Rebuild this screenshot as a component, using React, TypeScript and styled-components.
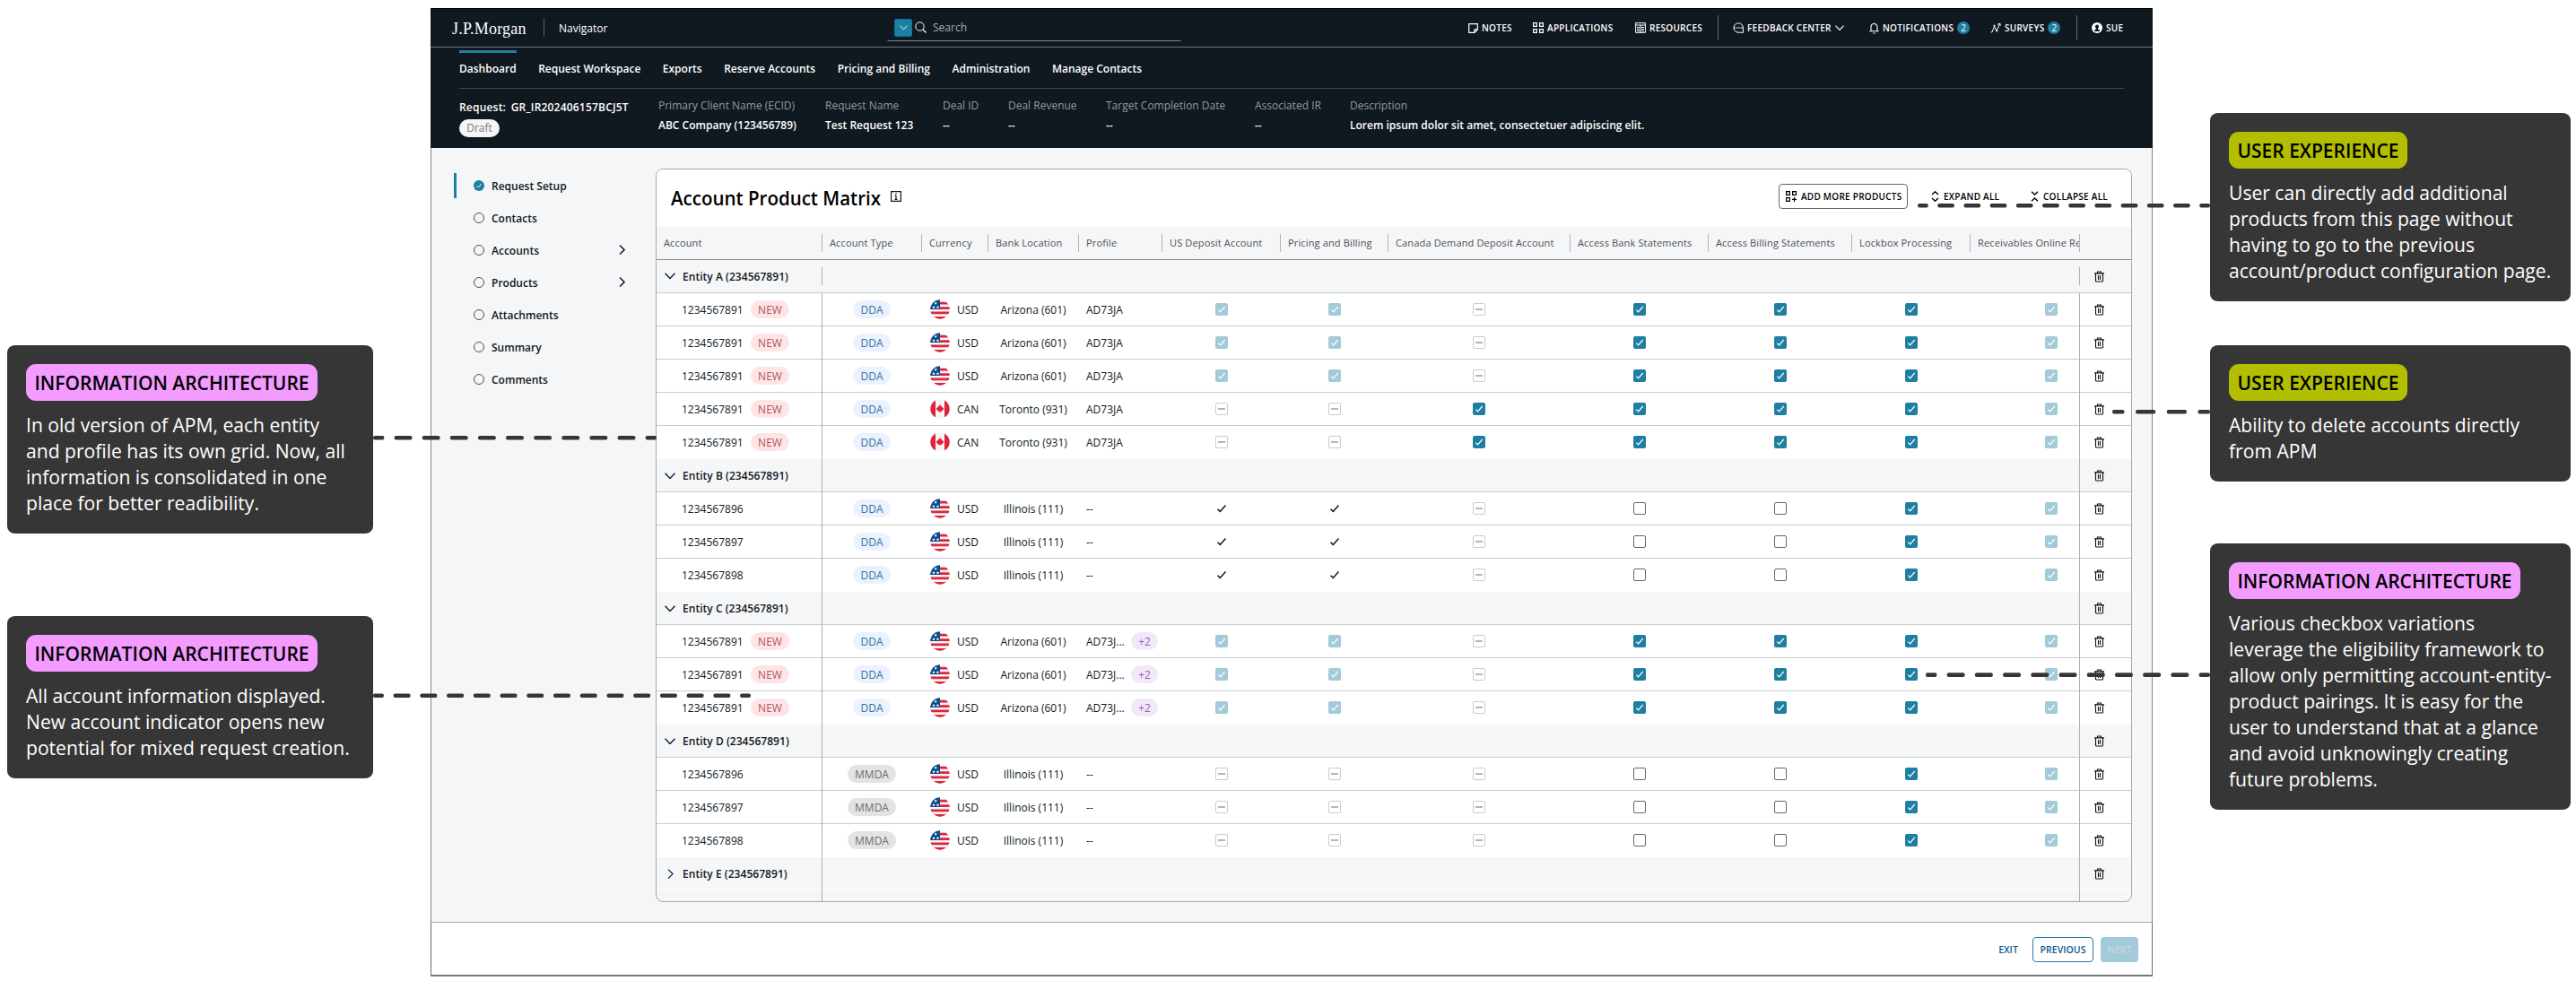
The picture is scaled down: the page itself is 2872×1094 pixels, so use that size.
import React from "react";
import styled, { createGlobalStyle, css } from "styled-components";

const Global = createGlobalStyle`
  * { box-sizing: border-box; }
  body { margin: 0; background: #fff; font-family: "Open Sans", "Noto Sans", sans-serif; font-size: 12px; line-height: 16px; color: #101820; }
`;

const Board = styled.div`
  position: relative; width: 2872px; height: 1094px; overflow: hidden; background: #fff;
  display: grid; grid-template-columns: 480px 1920px 472px;
`;
const Notes = styled.aside<{ $side: "left" | "right" }>`
  display: flex; flex-direction: column;
  ${(p) => p.$side === "left" ? css`padding: 385px 0 0 8px; gap: 92px;` : css`padding: 126px 0 0 64px; gap: 49px;`}
`;
const Note = styled.section<{ $w: number; $h: number; $gapAfter?: number }>`
  width: ${(p) => p.$w}px; height: ${(p) => p.$h}px; margin-bottom: ${(p) => p.$gapAfter || 0}px;
  padding: 21px 16px 0 21px; background: #363636; border-radius: 9px / 8px;
  display: flex; flex-direction: column; align-items: flex-start; gap: 12px;
`;
const NoteTag = styled.h3<{ $kind: "ia" | "ux" }>`
  margin: 0; height: 41px; width: ${(p) => (p.$kind === "ia" ? 325 : 199)}px; border-radius: 11px;
  display: flex; align-items: center; justify-content: center; white-space: nowrap;
  background: ${(p) => (p.$kind === "ia" ? "#f39bff" : "#b2bf00")};
  color: #000; font-size: 21px; font-weight: 600; padding-top: 1px;
`;
const NoteText = styled.p`
  margin: 0; color: #fff; font-size: 21.1px; line-height: 29px; white-space: pre;
`;
const Overlay = styled.svg`position: absolute; inset: 0; pointer-events: none;`;

const Frame = styled.main`
  margin-top: 9px; width: 1920px; height: 1080px; display: flex; flex-direction: column;
  border: 1px solid #85878a; border-top: 0; background: #f5f6f8;
`;
const Header = styled.header`
  background: #101820; color: #fff; height: 156px; margin: 0 -1px; border-top: 1px solid #000; flex: none;
`;
const TopBar = styled.div`
  height: 43px; border-bottom: 1px solid #75777c; display: flex; align-items: center; padding: 0 32px 0 24px;
`;
const Logo = styled.div`
  flex: none; width: 102px; font-family: "Liberation Serif", serif; font-size: 18px; line-height: 24px; letter-spacing: 0.2px; white-space: nowrap; padding-top: 1px;
`;
const Rule = styled.i<{ $h: number }>`width: 1px; height: ${(p) => p.$h}px; background: #63666b; flex: none;`;
const Product = styled.div`flex: none; margin-left: 16px; width: 366px; font-size: 12px; padding-top: 1px;`;
const SearchBox = styled.div`
  flex: none; width: 328px; height: 26px; margin-top: 3px; border-bottom: 1px solid #85878c; border-radius: 0 0 2px 2px;
  display: flex; align-items: flex-start; padding: 0 0 0 8px; color: #fff;
`;
const Scope = styled.span`
  width: 20px; height: 20px; margin-top: 1px; background: #1f7fa0; border: 1px solid #0b6cab; border-radius: 2px; display: grid; place-items: center; margin-right: 3px;
`;
const SearchLabel = styled.span`margin: 3px 0 0 7px; color: #a9adb0; font-size: 12px;`;
const SearchIc = styled.span`margin-top: 4px; display: flex;`;

const capsFont = css`
  font-family: "Open Sans", sans-serif; font-weight: 600; white-space: nowrap;
`;
const Tools = styled.div`margin-left: 320px; display: flex; align-items: center; flex: 1;`;
const Tool = styled.a<{ $w: number; $first?: boolean }>`
  ${capsFont} font-size: 10px; letter-spacing: 0.27px; width: ${(p) => p.$w}px; display: flex; align-items: center; gap: 4px; flex: none;
  margin-left: ${(p) => (p.$first ? 16 : 0)}px;
  svg { flex: none; }
`;
const Count = styled.b`
  width: 14px; height: 14px; border-radius: 7px; background: #1f7fa0; font-size: 10px; line-height: 14px; text-align: center; letter-spacing: 0; font-weight: 500; flex: none;
`;
const Nav = styled.nav`
  margin: 0 32px; height: 46px; border-bottom: 1px solid #45484c; display: flex; gap: 24.5px; padding-top: 3px;
`;
const NavItem = styled.a<{ $active?: boolean }>`
  height: 42px; border-top: 3px solid ${(p) => (p.$active ? "#1f7fa0" : "transparent")};
  padding-top: 10px; font-weight: 600; font-size: 12px; white-space: nowrap;
`;
const Facts = styled.dl`
  margin: 0; padding: 11px 32px 0; display: flex;
`;
const Fact = styled.div<{ $w: number }>`width: ${(p) => p.$w}px; flex: none; display: flex; flex-direction: column; gap: 6px; white-space: nowrap;`;
const FactKey = styled.dt`color: #96999d;`;
const FactVal = styled.dd`margin: 0; font-weight: 600;`;
const ReqTitle = styled.div`font-weight: 600; letter-spacing: 0.2px; word-spacing: -0.5px; padding-top: 2px; white-space: pre;`;
const Draft = styled.span`
  width: 45px; height: 20px; margin-top: -1px; border-radius: 10px; background: #f3f5f7; color: #74777b; text-align: center; line-height: 20px;
`;

const Body = styled.div`flex: 1; display: flex; min-height: 0;`;
const Side = styled.ul`
  list-style: none; margin: 28px 0 0 25px; padding: 0; width: 225px; display: flex; flex-direction: column; gap: 8px;
`;
const Step = styled.li<{ $active?: boolean }>`
  height: 28px; width: 191px; border-left: 3px solid ${(p) => (p.$active ? "#1f7fa0" : "transparent")};
  padding-left: 19px; display: flex; align-items: center; gap: 8px; font-weight: 600;
  svg { flex: none; }
  span { flex: 1; padding-top: 2px; }
`;
const Card = styled.section`
  margin: 23px 0 0; width: 1646px; height: 818px; flex: none; border: 1px solid #a6a9ac; border-radius: 8px; background: #f5f6f8; overflow: hidden; display: flex; flex-direction: column;
`;
const CardHead = styled.div`
  height: 64px; background: #fff; display: flex; align-items: center; padding: 0 25px 4px 16px; flex: none;
  svg { flex: none; }
`;
const Title = styled.h1`
  margin: 0 9px 0 0; font-size: 22px; line-height: 30px; font-weight: 600; color: #000; width: 236px; white-space: nowrap; padding-top: 1px;
  transform: scaleX(0.932); transform-origin: left center;
`;
const Actions = styled.div`margin-left: auto; display: flex; align-items: center; gap: 18px;`;
const Action = styled.button<{ $w: number; $boxed?: boolean }>`
  ${capsFont} font-size: 10px; letter-spacing: 0.25px; color: #000; height: 28px; width: ${(p) => p.$w}px; background: none; padding: 0 0 0 7px;
  border: 1px solid ${(p) => (p.$boxed ? "#63666b" : "transparent")}; border-radius: 4px;
  display: flex; align-items: center; gap: ${(p) => (p.$boxed ? 4 : 5)}px;
`;

const columns = "185px 111px 74px 101px 93px 132px 120px 203px 154px 160px 132px 122px 57px";
const line = "1px solid #c9cbcc";
const HeadRow = styled.div`
  display: grid; grid-template-columns: ${columns}; height: 37px; border-bottom: 1px solid #8d9093; flex: none;
`;
const HeadCell = styled.div`
  margin: 8px 0; height: 20px; line-height: 20px; font-size: 11px; font-weight: 500; letter-spacing: 0.15px; color: #4c4f53; padding-left: 8px;
  border-right: 1px solid #b3b5b8; white-space: nowrap; overflow: hidden;
  &:last-child { border: 0; }
`;
const GroupRow = styled.div<{ $tail?: boolean }>`
  display: grid; grid-template-columns: 185px 1402px 57px; height: 37px; border-bottom: 1px solid ${(p) => (p.$tail ? "#fff" : "#c9cbcc")}; flex: none;
`;
const GroupCell = styled.div<{ $short?: boolean; $rule?: boolean }>`
  display: flex; align-items: center; gap: 8px; padding-left: 9px; font-weight: 600; white-space: nowrap;
  ${(p) => p.$rule && css`border-right: 1px solid #b0b2b5;`}
  ${(p) => p.$short ? css`margin: 8px 0;` : p.$rule && css`margin-bottom: -1px;`}
`;
const Toggle = styled.span`width: 12px; display: flex; justify-content: center; flex: none;`;
const GroupName = styled.span`padding-top: 1px; letter-spacing: 0.04px;`;
const Row = styled.div<{ $last?: boolean }>`
  display: grid; grid-template-columns: ${columns}; height: 37px; background: #fff; flex: none;
  border-bottom: ${(p) => (p.$last ? "1px solid #fff" : line)};
`;
const Cell = styled.div<{ $rule?: boolean; $left?: number }>`
  display: flex; align-items: center; white-space: nowrap; min-width: 0;
  ${(p) => p.$left !== undefined ? css`padding-left: ${p.$left}px;` : css`justify-content: center; padding-right: 1px;`}
  ${(p) => p.$rule && css`border-right: 1px solid #acaeb0; margin-bottom: -1px; padding-bottom: 1px;`}
`;
const TrashCell = styled.div`display: flex; align-items: center; padding: 1px 0 0 16px;`;
const Tail = styled.div`
  flex: 1; display: grid; grid-template-columns: 185px 1402px 57px;
`;
const TailCell = styled.i`border-right: 1px solid #acaeb0; &:last-child { border: 0; }`;
const pillTones = {
  red: ["#fde5e7", "#b9505a"],
  blue: ["#ebf1fd", "#2b769e"],
  grey: ["#e3e3e2", "#6b6d6e"],
  purple: ["#f1e8fa", "#9a5cb0"],
};
const Pill = styled.span<{ $tone: keyof typeof pillTones; $w: number }>`
  width: ${(p) => p.$w}px; height: 20px; border-radius: 10px; text-align: center; line-height: 21px; flex: none;
  background: ${(p) => pillTones[p.$tone][0]}; color: ${(p) => pillTones[p.$tone][1]};
`;
const CellText = styled.span<{ $w?: number; $ml?: number }>`
  padding-top: 2px; margin-left: ${(p) => p.$ml || 0}px; ${(p) => p.$w && css`width: ${p.$w}px;`}
`;
const Box = styled.span<{ $kind: string }>`
  width: 14px; height: 14px; border-radius: 2px; display: grid; place-items: center; flex: none;
  ${(p) => p.$kind === "on" && css`background: #1f7fa0;`}
  ${(p) => p.$kind === "dim" && css`background: #a3cad8;`}
  ${(p) => p.$kind === "na" && css`border: 1px solid #c9cbcd; background: #fff;`}
  ${(p) => p.$kind === "off" && css`border: 1px solid #63666b; background: #fff;`}
`;
const Footer = styled.footer`
  height: 60px; margin: 0 -1px; border: 1px solid #6a6c6f; border-top-color: #a4a6a9; background: #fff; flex: none;
  display: flex; align-items: center; justify-content: flex-end; gap: 8px; padding: 1px 15px 0 0;
`;
const FootBtn = styled.button<{ $look: "text" | "line" | "off"; $w: number }>`
  ${capsFont} font-size: 10.5px; letter-spacing: 0.05px; width: ${(p) => p.$w}px; height: 28px; padding: 0; border-radius: 4px; text-align: center;
  color: ${(p) => (p.$look === "off" ? "#cdd5da" : "#0b5a92")};
  background: ${(p) => (p.$look === "off" ? "#a3cad8" : "transparent")};
  border: ${(p) => (p.$look === "line" ? "1px solid #1f7fa0" : "0")};
`;

const Ic = ({ w = 12, h = 12, box, children }: { w?: number; h?: number; box?: string; children: React.ReactNode }) => (
  <svg width={w} height={h} viewBox={box || `0 0 ${w} ${h}`} fill="none" stroke="currentColor" strokeWidth="1">{children}</svg>
);
const NoteIc = () => <Ic w={11} h={11}><path d="M.7.7h9.6v6.2L6.9 10.3H.7z M10.3 6.9H6.9v3.4" strokeWidth="1.2" /></Ic>;
const AppsIc = () => <Ic><path d="M.6.6h3.8v3.8H.6zM7.6.6h3.8v3.8H7.6zM.6 7.6h3.8v3.8H.6zM7.6 7.6h3.8v3.8H7.6z" strokeWidth="1.2" /></Ic>;
const AddIc = () => <Ic w={13}><path d="M.6.6h3.8v3.8H.6zM7.6.6h3.8v3.8H7.6zM.6 7.6h3.8v3.8H.6zM9.5 6.8v5.2M6.9 9.4h5.2" strokeWidth="1.2" /></Ic>;
const ResIc = () => <Ic><path d="M.6.6h10.8v10.8H.6zM.6 3h10.8M6 3v8.4M2 5.5h3M2 7.5h3M2 9.5h3M7 5.5h3M7 7.5h3M7 9.5h3" /></Ic>;
const ChatIc = () => <Ic><path d="M11.4 11.4v-5.4A5.2 5.2 0 1 0 6 11.2h2.4l3 .2M.8 6h2M9 6h2" /><path d="M3.6 6h1M5.5 6h1M7.4 6h1" strokeWidth="1.3" /></Ic>;
const BellIc = () => <Ic w={11} h={13}><path d="M5.5.5v1M2 9.5V5a3.5 3.5 0 0 1 7 0v4.500M.3 9.700h10.400M4.300 12h2.400" strokeWidth="1.1" /></Ic>;
const SurveyIc = () => <Ic><path d="M.5 10.800h1.500L4.500 4.500 7 9.500 10.600 1.500M8 2.500l2.700-1.500.7 2.800" /><circle cx="4.500" cy="3.800" r=".8" /><circle cx="7.200" cy="9.300" r=".8" /></Ic>;
const UserIc = () => <Ic><circle cx="6" cy="6" r="6" fill="currentColor" stroke="none" /><path d="M6 2.400a2 2 0 0 1 2 2.200c0 1-.5 1.700-.9 2v1.200l1.800.8v1.500H3.100V8.600l1.800-.8V6.600c-.4-.3-.9-1-.9-2a2 2 0 0 1 2-2.200z" fill="#101820" stroke="none" /></Ic>;
const Down = ({ w = 11 }: { w?: number }) => <Ic w={w} h={w * 0.64} box="0 0 11 7"><path d="M.5.7 5.500 6l5-5.300" strokeWidth="1.200" /></Ic>;
const Right = ({ w = 7, bold = 1.5 }: { w?: number; bold?: number }) => <Ic w={w} h={w * 1.6} box="0 0 7 11"><path d="M1 .5 6 5.500 1 10.500" strokeWidth={bold} /></Ic>;
const SearchGlyph = () => <Ic w={13} h={13}><circle cx="5.500" cy="5.500" r="4.700" /><path d="m9 9 3.500 3.500" stroke="#fff" strokeWidth="1.200" /></Ic>;
const InfoIc = () => <Ic><path d="M.6.600h10.800v10.800H.6zM6 5v4.500M4.600 5.200H6M4.500 9.300h3" strokeWidth="1.200" /><path d="M5.300 2.500h1.400v1.300H5.300z" fill="currentColor" stroke="none" /></Ic>;
const Expand = () => <Ic w={9}><path d="M1 4 4.500.8 8 4M1 8l3.500 3.200L8 8" strokeWidth="1.400" /></Ic>;
const Collapse = () => <Ic w={9}><path d="M1 .8 4.500 4 8 .8M1 11.200 4.500 8 8 11.200" strokeWidth="1.400" /></Ic>;
const Trash = () => <Ic w={11} h={13}><path d="M0 2.900h11M3.500 2.600V1h4v1.600M1.500 3v8.200q0 .8.800.8h6.400q.8 0 .8-.8V3M4.500 5v5M6.500 5v5" stroke="#101010" strokeWidth="1.100" /></Ic>;
const Tick = ({ color = "#fff", s = 10 }: { color?: string; s?: number }) => (
  <svg width={s} height={s} viewBox="0 0 10 10" fill="none"><path d="M1.300 5.600 3.600 7.800 8.700 2" stroke={color} strokeWidth="1.200" /></svg>
);
const US = () => (
  <svg width="22" height="22" viewBox="0 0 22 22">
    <clipPath id="usround"><circle cx="11" cy="11" r="10.700" /></clipPath>
    <g clipPath="url(#usround)">
      <path fill="#f5f6f8" d="M0 0h22v22H0z" />
      <path fill="#e0243a" d="M0 2.800h22v2.700H0zM0 8.200h22v2.700H0zM0 13.600h22v2.700H0zM0 19h22v3H0z" />
      <path fill="#0a4d8c" d="M0 0h11v11H0z" />
      <path fill="#fff" d="m4 7 .5 1.100 1.200.1-.9.8.3 1.200L4 9.600l-1.100.6.3-1.200-.9-.8 1.200-.1zM8.500 7l.5 1.100 1.200.1-.9.8.3 1.200-1.100-.6-1.100.6.3-1.200-.9-.8 1.200-.1zM6.200 2.500l.5 1.100 1.200.1-.9.8.3 1.200-1.100-.6-1.100.6.3-1.200-.9-.8 1.200-.1z" />
    </g>
  </svg>
);
const CA = () => (
  <svg width="22" height="22" viewBox="0 0 22 22">
    <clipPath id="caround"><circle cx="11" cy="11" r="10.700" /></clipPath>
    <g clipPath="url(#caround)">
      <path fill="#f5f5f8" d="M0 0h22v22H0z" />
      <path fill="#e0243a" d="M0 0h6v22H0zM16 0h6v22h-6z" />
      <path fill="#e0243a" d="m11 6 1.100 1.900 1.100-.4-.3 2 1-.6.3.9 1.100.2-.7 1.300.4.500-2.300 1.600.2.900-1.700-.2v1.400h-.4v-1.400l-1.700.2.200-.9L7 11.800l.4-.5-.7-1.300 1.100-.2.300-.9 1 .6-.3-2 1.100.4z" />
    </g>
  </svg>
);

type Kind = "on" | "dim" | "na" | "off" | "tick";
const Check = ({ kind }: { kind: Kind }) => {
  if (kind === "tick") return <Tick color="#101010" s={12} />;
  return (
    <Box $kind={kind}>
      {(kind === "on" || kind === "dim") && <Tick />}
      {kind === "na" && <svg width="8" height="2"><path d="M0 1h8" stroke="#b4b6b8" strokeWidth="2" /></svg>}
    </Box>
  );
};

type Account = { no: string; fresh?: boolean; type: "DDA" | "MMDA"; cur: "USD" | "CAN"; bank: string; profile: string; more?: boolean; checks: Kind[] };
const repeat = (n: number, a: Omit<Account, "no">, from = 1234567891, step = 0): Account[] =>
  Array.from({ length: n }, (_, i) => ({ ...a, no: String(from + i * step) }));
const arizona: Omit<Account, "no"> = { fresh: true, type: "DDA", cur: "USD", bank: "Arizona (601)", profile: "AD73JA", checks: ["dim", "dim", "na", "on", "on", "on", "dim"] };
const groups: { name: string; rows: Account[] }[] = [
  { name: "Entity A (234567891)", rows: [...repeat(3, arizona), ...repeat(2, { ...arizona, cur: "CAN", bank: "Toronto (931)", checks: ["na", "na", "on", "on", "on", "on", "dim"] })] },
  { name: "Entity B (234567891)", rows: repeat(3, { type: "DDA", cur: "USD", bank: "Illinois (111)", profile: "--", checks: ["tick", "tick", "na", "off", "off", "on", "dim"] }, 1234567896, 1) },
  { name: "Entity C (234567891)", rows: repeat(3, { ...arizona, profile: "AD73J...", more: true }) },
  { name: "Entity D (234567891)", rows: repeat(3, { type: "MMDA", cur: "USD", bank: "Illinois (111)", profile: "--", checks: ["na", "na", "na", "off", "off", "on", "dim"] }, 1234567896, 1) },
  { name: "Entity E (234567891)", rows: [] },
];
const heads = ["Account", "Account Type", "Currency", "Bank Location", "Profile", "US Deposit Account", "Pricing and Billing", "Canada Demand Deposit Account", "Access Bank Statements", "Access Billing Statements", "Lockbox Processing", "Receivables Online Re", ""];

const AccountRow = ({ a, last }: { a: Account; last: boolean }) => (
  <Row $last={last}>
    <Cell $left={28} $rule><CellText $w={77}>{a.no}</CellText>{a.fresh && <Pill $tone="red" $w={43}>NEW</Pill>}</Cell>
    <Cell><Pill $tone={a.type === "DDA" ? "blue" : "grey"} $w={a.type === "DDA" ? 42 : 54}>{a.type}</Pill></Cell>
    <Cell $left={9}>{a.cur === "USD" ? <US /> : <CA />}<CellText $ml={8}>{a.cur}</CellText></Cell>
    <Cell><CellText>{a.bank}</CellText></Cell>
    <Cell $left={8}><CellText $w={50}>{a.profile}</CellText>{a.more && <Pill $tone="purple" $w={30}>+2</Pill>}</Cell>
    {a.checks.map((k, i) => i === 6
      ? <Cell key={i} $left={83} $rule><Check kind={k} /></Cell>
      : <Cell key={i}><Check kind={k} /></Cell>)}
    <TrashCell><Trash /></TrashCell>
  </Row>
);

const Dash = ({ x1, x2, y, n }: { x1: number; x2: number; y: number; n: number }) => {
  const cap = 2.4;
  const period = (x2 - x1 - cap * 2) / n;
  const dash = period * 0.64;
  return (
    <g fill="#363636">
      {Array.from({ length: n + 1 }, (_, i) => {
        const c = x1 + cap + i * period;
        const a = Math.max(x1, c - dash / 2);
        const b = Math.min(x2, c + dash / 2);
        return <rect key={i} x={a} y={y - 2.300} width={b - a} height="4.600" rx="2" />;
      })}
    </g>
  );
};

const facts: [string, string, number][] = [
  ["Primary Client Name (ECID)", "ABC Company (123456789)", 186],
  ["Request Name", "Test Request 123", 131],
  ["Deal ID", "--", 73],
  ["Deal Revenue", "--", 109],
  ["Target Completion Date", "--", 166],
  ["Associated IR", "--", 106],
  ["Description", "Lorem ipsum dolor sit amet, consectetuer adipiscing elit.", 340],
];

export default function App() {
  return (
    <Board>
      <Global />
      <Notes $side="left">
        <Note $w={408} $h={210}>
          <NoteTag $kind="ia">INFORMATION ARCHITECTURE</NoteTag>
          <NoteText>{"In old version of APM, each entity\nand profile has its own grid. Now, all\ninformation is consolidated in one\nplace for better readibility."}</NoteText>
        </Note>
        <Note $w={408} $h={181}>
          <NoteTag $kind="ia">INFORMATION ARCHITECTURE</NoteTag>
          <NoteText>{"All account information displayed.\nNew account indicator opens new\npotential for mixed request creation."}</NoteText>
        </Note>
      </Notes>

      <Frame>
        <Header>
          <TopBar>
            <Logo>J.P.Morgan</Logo>
            <Rule $h={20} />
            <Product>Navigator</Product>
            <SearchBox>
              <Scope><Down w={9} /></Scope>
              <SearchIc><SearchGlyph /></SearchIc>
              <SearchLabel>Search</SearchLabel>
            </SearchBox>
            <Tools>
              <Tool $w={72}><NoteIc />NOTES</Tool>
              <Tool $w={114}><AppsIc />APPLICATIONS</Tool>
              <Tool $w={92}><ResIc />RESOURCES</Tool>
              <Rule $h={28} />
              <Tool $w={152} $first><ChatIc />FEEDBACK CENTER<Down w={10} /></Tool>
              <Tool $w={135}><BellIc />NOTIFICATIONS<Count>2</Count></Tool>
              <Tool $w={96}><SurveyIc />SURVEYS<Count>2</Count></Tool>
              <Rule $h={28} />
              <Tool $w={36} $first><UserIc />SUE</Tool>
            </Tools>
          </TopBar>
          <Nav>
            {["Dashboard", "Request Workspace", "Exports", "Reserve Accounts", "Pricing and Billing", "Administration", "Manage Contacts"].map((t, i) => (
              <NavItem key={t} $active={i === 0}>{t}</NavItem>
            ))}
          </Nav>
          <Facts>
            <Fact $w={222}>
              <ReqTitle>{"Request:  GR_IR202406157BCJ5T"}</ReqTitle>
              <Draft>Draft</Draft>
            </Fact>
            {facts.map(([k, v, w]) => (
              <Fact key={k} $w={w}><FactKey>{k}</FactKey><FactVal>{v}</FactVal></Fact>
            ))}
          </Facts>
        </Header>

        <Body>
          <Side>
            {["Request Setup", "Contacts", "Accounts", "Products", "Attachments", "Summary", "Comments"].map((t, i) => (
              <Step key={t} $active={i === 0}>
                <svg width="12" height="12" viewBox="0 0 12 12" fill="none">
                  {i === 0
                    ? <><circle cx="6" cy="6" r="6" fill="#1f7fa0" /><path d="M3.500 6.200 5.300 8 8.600 4.200" stroke="#fff" /></>
                    : <circle cx="6" cy="6" r="5.500" stroke="#4c4f53" />}
                </svg>
                <span>{t}</span>
                {(i === 2 || i === 3) && <Right />}
              </Step>
            ))}
          </Side>
          <Card>
            <CardHead>
              <Title>Account Product Matrix</Title>
              <InfoIc />
              <Actions>
                <Action $w={144} $boxed><AddIc />ADD MORE PRODUCTS</Action>
                <Action $w={93}><Expand />EXPAND ALL</Action>
                <Action $w={95}><Collapse />COLLAPSE ALL</Action>
              </Actions>
            </CardHead>
            <HeadRow>{heads.map((h, i) => <HeadCell key={i}>{h}</HeadCell>)}</HeadRow>
            {groups.map((g, gi) => (
              <React.Fragment key={g.name}>
                <GroupRow $tail={!g.rows.length}>
                  <GroupCell $rule $short={gi === 0}>
                    <Toggle>{g.rows.length ? <Down w={12} /> : <Right bold={1.2} />}</Toggle>
                    <GroupName>{g.name}</GroupName>
                  </GroupCell>
                  <GroupCell $rule $short={gi === 0} />
                  <TrashCell><Trash /></TrashCell>
                </GroupRow>
                {g.rows.map((a, i) => <AccountRow key={i} a={a} last={i === g.rows.length - 1} />)}
              </React.Fragment>
            ))}
            <Tail><TailCell /><TailCell /><TailCell /></Tail>
          </Card>
        </Body>
        <Footer>
          <FootBtn $look="text" $w={38}>EXIT</FootBtn>
          <FootBtn $look="line" $w={68}>PREVIOUS</FootBtn>
          <FootBtn $look="off" $w={42}>NEXT</FootBtn>
        </Footer>
      </Frame>

      <Notes $side="right">
        <Note $w={402} $h={210}>
          <NoteTag $kind="ux">USER EXPERIENCE</NoteTag>
          <NoteText>{"User can directly add additional\nproducts from this page without\nhaving to go to the previous\naccount/product configuration page."}</NoteText>
        </Note>
        <Note $w={402} $h={152} $gapAfter={20}>
          <NoteTag $kind="ux">USER EXPERIENCE</NoteTag>
          <NoteText>{"Ability to delete accounts directly\nfrom APM"}</NoteText>
        </Note>
        <Note $w={402} $h={297}>
          <NoteTag $kind="ia">INFORMATION ARCHITECTURE</NoteTag>
          <NoteText>{"Various checkbox variations\nleverage the eligibility framework to\nallow only permitting account-entity-\nproduct pairings. It is easy for the\nuser to understand that at a glance\nand avoid unknowingly creating\nfuture problems."}</NoteText>
        </Note>
      </Notes>

      <Overlay width="2872" height="1094">
        <Dash x1={416} x2={732} y={488.3} n={10} />
        <Dash x1={416} x2={837} y={775.7} n={14} />
        <Dash x1={2138} x2={2464} y={229.2} n={11} />
        <Dash x1={2355} x2={2464} y={459.2} n={3} />
        <Dash x1={2147} x2={2464} y={752.6} n={10} />
      </Overlay>
    </Board>
  );
}
